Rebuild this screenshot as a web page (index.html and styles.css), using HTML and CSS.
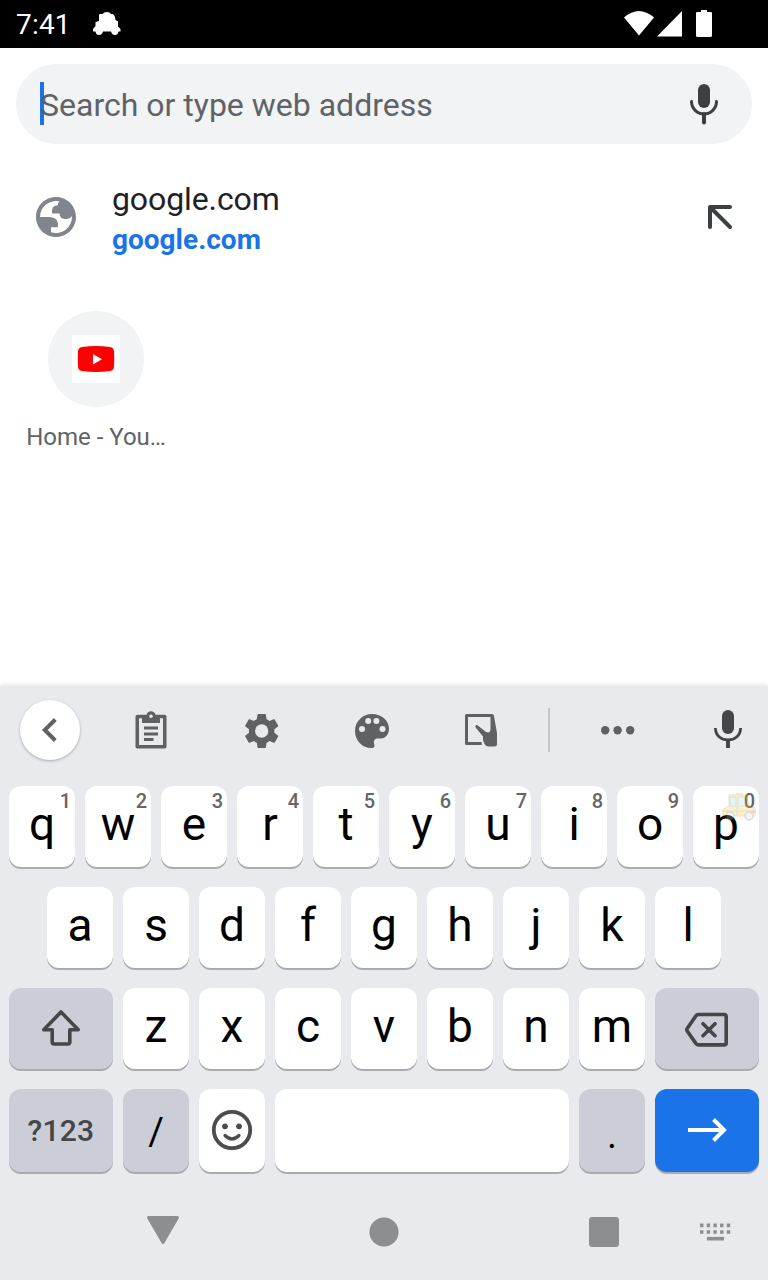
FILE: index.html
```html
<!DOCTYPE html>
<html lang="en">
<head>
<meta charset="utf-8">
<title>New tab</title>
<link rel="stylesheet" href="styles.css">
</head>
<body>
<div class="screen">
  <header class="status">
    <span class="clock">7:41</span>
    <svg class="car" width="30" height="26" viewBox="0 0 30 26"><path d="M7 11V5q0-1 1-1h2.500Q12 2 15 2t4 2h1.500Q23 5 23.500 10L26 11.500v5L28.500 19v2.500H26.500Q26 25 23 25t-4-3.500h-8Q10 25 7 25t-3.500-3.500H1V19l2.500-3v-4z" fill="#fff"/></svg>
    <svg class="signals" width="92" height="28" viewBox="0 0 92 28" fill="#fff"><path d="M0 7.500Q15-5.500 30 7.500L15 25.500z"/><path d="M58 1v25.500H33z"/><path d="M77 0h6v2h4q1 0 1 1v22.500q0 1.500-1.500 1.500h-13q-1.500 0-1.500-1.500V3q0-1 1-1h4z"/></svg>
  </header>
  <main class="page">
    <div class="search">
      <span class="cursor"></span>
      <span class="hint">Search or type web address</span>
      <svg class="icon" viewBox="0 0 48 48" fill="none" stroke="#3c4043"><rect x="18" y="4" width="12" height="24" rx="6" fill="#3c4043" stroke="none"/><path d="M11.500 21.500a12.500 12.500 0 0 0 25 0" stroke-width="3" stroke-linecap="round"/><path d="M24 34v8.500" stroke-width="4" stroke-linecap="round"/></svg>
    </div>
    <div class="suggestion">
      <svg class="icon" viewBox="0 0 24 24" fill="#80868b" fill-rule="evenodd"><path d="M12 2C6.480 2 2 6.480 2 12s4.480 10 10 10 10-4.480 10-10S17.520 2 12 2zM4 12h4.400c3.407.022 4.922 1.730 4.543 5.127H9.488v2.470a8.004 8.004 0 0 0 10.498-8.083C19.327 12.504 18.332 13 17 13c-2.137 0-3.206-.916-3.206-2.750h-3.748c-.274-2.728.683-4.092 2.870-4.092 0-.975.327-1.597.811-1.970A8.004 8.004 0 0 0 4 12z"/></svg>
      <div class="suggestion-text">
        <div class="title">google.com</div>
        <div class="url">google.com</div>
      </div>
      <svg class="icon" viewBox="0 0 48 48" fill="none" stroke="#3c4043" stroke-width="4" stroke-linecap="round" stroke-linejoin="round"><path d="M34 14H14v20M14.500 14.500L34 34"/></svg>
    </div>
    <div class="tile">
      <div class="tile-circle"><svg width="48" height="48" viewBox="0 0 48 48"><path fill="#fff" d="M0 0h48v48H0z"/><path fill="#f00" d="M10 12q14-2 28 0 3.500.500 4 4 .500 8 0 16-.500 3.500-4 4-14 2-28 0-3.500-.500-4-4-.500-8 0-16 .500-3.500 4-4z"/><path fill="#fff" d="M21 19v10.500l9-5.300z"/></svg></div>
      <div class="tile-label">Home - You…</div>
    </div>
  </main>
  <section class="keyboard">
    <div class="toolbar">
      <span class="back"><svg class="icon" viewBox="0 0 48 48" fill="none" stroke="#5f6163" stroke-width="4"><path d="M29.300 13.500L18.800 24 29.300 34.500"/></svg></span>
      <svg class="icon" viewBox="0 0 48 48"><path fill="none" stroke="#5f6163" stroke-width="3.500" stroke-linejoin="round" d="M10.250 10.500h27.500v30.250h-27.500z"/><path fill="#5f6163" d="M15 9h4.500a4.600 4.600 0 0 1 9 0H33v8H15zM17 20.500h14v3H17zM17 26.500h14v3H17zM17 32h9.500v3H17z"/><circle cx="24" cy="10.300" r="1.800" fill="#e8eaed"/></svg>
      <svg class="icon" viewBox="0 0 48 48"><g transform="translate(3.300 4.600) scale(1.700)"><path fill="#5f6163" d="M19.430 12.980c.04-.32.07-.64.07-.98s-.03-.66-.07-.98l2.110-1.650c.19-.15.24-.42.12-.64l-2-3.460c-.12-.22-.39-.3-.61-.22l-2.490 1c-.52-.4-1.080-.73-1.690-.98l-.38-2.650C14.460 2.180 14.250 2 14 2h-4c-.25 0-.46.18-.49.42l-.38 2.650c-.61.25-1.170.59-1.690.98l-2.490-1c-.23-.09-.49 0-.61.22l-2 3.460c-.13.22-.07.49.12.64l2.110 1.650c-.04.32-.07.65-.07.98s.03.66.07.98l-2.110 1.650c-.19.15-.24.42-.12.64l2 3.460c.12.22.39.3.61.22l2.490-1c.52.4 1.080.73 1.690.98l.38 2.650c.03.24.24.42.49.42h4c.25 0 .46-.18.49-.42l.38-2.650c.61-.25 1.170-.59 1.690-.98l2.490 1c.23.09.49 0 .61-.22l2-3.460c.12-.22.07-.49-.12-.64z"/><circle cx="12" cy="12" r="3.900" fill="#e8eaed"/></g></svg>
      <svg class="icon" viewBox="0 0 48 48"><path fill="#5f6163" d="M24 8C14.500 8 7 15.500 7 25s7 17 16.500 17c2.800 0 3.700-2 2.500-4-.5-2.700.3-5 2.500-5.500H33c4.500 0 8-4.500 8-9.500 0-8.500-7.500-15-17-15z"/><g fill="#e8eaed"><circle cx="14" cy="23" r="3"/><circle cx="20.200" cy="14.900" r="3"/><circle cx="28.400" cy="14.900" r="3"/><circle cx="34.500" cy="23" r="3"/></g></svg>
      <svg class="icon" viewBox="0 0 48 48"><path fill="none" stroke="#5f6163" stroke-width="3" stroke-linejoin="round" d="M35 9.500H9.500v28h15.200"/><path fill="#5f6163" d="M33.500 8h1.500q1.700 0 1.900 1.500L40 27v11q0 2.500-2.500 2.500h-6q-2.500 0-4-2.500l-1.500-4v-3.500L19 22q-1.500-2.500.5-3 .8-.1 2 1l7.500 6 2.500.5q2-.5 2-4z"/></svg>
      <span class="divider"></span>
      <svg class="icon" viewBox="0 0 48 48" fill="#5f6163"><circle cx="11.200" cy="24.200" r="4.200"/><circle cx="23.600" cy="24.200" r="4.200"/><circle cx="36.200" cy="24.200" r="4.200"/></svg>
      <svg class="icon kb-mic" viewBox="0 0 48 48" fill="none" stroke="#444648"><rect x="18" y="4" width="12" height="24" rx="6" fill="#444648" stroke="none"/><path d="M11.400 22c0 16 25.200 16 25.200 0" stroke-width="2.800"/><path d="M24 34v8" stroke-width="4"/></svg>
    </div>
    <div class="row">
      <div class="key">q<sup>1</sup></div><div class="key">w<sup>2</sup></div><div class="key">e<sup>3</sup></div><div class="key">r<sup>4</sup></div><div class="key">t<sup>5</sup></div><div class="key">y<sup>6</sup></div><div class="key">u<sup>7</sup></div><div class="key">i<sup>8</sup></div><div class="key">o<sup>9</sup></div>
      <div class="key">p<sup>0</sup>
        <svg class="taxi" width="36" height="30" viewBox="0 0 36 30"><path fill="#e8a33d" d="M14 1h7v2h-7z"/><path fill="#ffd21f" stroke="#c99a2a" d="M7 3h18l2 11 6 2v8H1v-7l6-3z"/><path fill="#a6dcef" stroke="#6c8fa0" d="M8 5h6v9H8zM16 5h7l2 9h-9z"/><path stroke="#6c8fa0" d="M1 19h33M15 14v10"/><path fill="#c66" d="M30 18h4v3h-4z"/><g fill="#ddd" stroke="#777" stroke-width="1.500"><circle cx="8" cy="24" r="4"/><circle cx="27" cy="24" r="4"/></g></svg>
      </div>
    </div>
    <div class="row">
      <div class="key">a</div><div class="key">s</div><div class="key">d</div><div class="key">f</div><div class="key">g</div><div class="key">h</div><div class="key">j</div><div class="key">k</div><div class="key">l</div>
    </div>
    <div class="row">
      <div class="key dark wide"><svg class="icon" viewBox="0 0 48 48" fill="none" stroke="#444648" stroke-width="3.600" stroke-linejoin="round"><path d="M24 8L6.800 25.800h8.400V38q0 2 2 2h13.600q2 0 2-2V25.800h8.400z"/></svg></div>
      <div class="key">z</div><div class="key">x</div><div class="key">c</div><div class="key">v</div><div class="key">b</div><div class="key">n</div><div class="key">m</div>
      <div class="key dark wide"><svg class="icon" viewBox="0 0 48 48" fill="none" stroke="#444648" stroke-width="3.600" stroke-linejoin="round" stroke-linecap="round"><path d="M15.500 10.500h25.700q2 0 2 2v26.400q0 2-2 2h-25.700q-1.800 0-2.700-1.500L4.200 27q-.8-1.400 0-2.600l8.600-12.400q.9-1.500 2.700-1.500zM20 19.700l12 12M32 19.700l-12 12"/></svg></div>
    </div>
    <div class="row last">
      <div class="key dark wide symbols">?123</div>
      <div class="key dark slash">/</div>
      <div class="key"><svg class="icon" viewBox="0 0 48 48" fill="none" stroke="#4c4c4c"><circle cx="24" cy="24" r="18.200" stroke-width="3.800"/><path d="M17 29.500q7 7 14 0" stroke-width="3.200" stroke-linecap="round"/><g fill="#4c4c4c" stroke="none"><circle cx="17" cy="20.300" r="2.900"/><circle cx="31" cy="20.300" r="2.900"/></g></svg></div>
      <div class="key space"></div>
      <div class="key dark dot">.</div>
      <div class="key wide go"><svg class="icon" viewBox="0 0 48 48" fill="none" stroke="#fff" stroke-width="4"><path d="M5 24h35M30.500 13.500L41 24 30.500 34.500"/></svg></div>
    </div>
    <nav class="nav">
      <svg class="icon" viewBox="0 0 48 48" fill="#8d8e90" stroke="#8d8e90" stroke-width="3" stroke-linejoin="round"><path d="M9.500 9.500h29L24 34.500z"/></svg>
      <svg class="icon" viewBox="0 0 48 48" fill="#8d8e90"><circle cx="24" cy="24" r="14.600"/></svg>
      <svg class="icon" viewBox="0 0 48 48" fill="#8d8e90"><rect x="9" y="9" width="30" height="30" rx="3"/></svg>
      <svg class="icon" viewBox="0 0 48 48" stroke="#8d8e90" stroke-width="3.600"><path stroke-dasharray="3.400 3.300" d="M9 17.400h31M9 24h31"/><path d="M16 30.700h17"/></svg>
    </nav>
  </section>
</div>
</body>
</html>
```

FILE: styles.css
```css
* { box-sizing: border-box; }
body { margin: 0; background: #fff; font-family: Roboto, "Liberation Sans", sans-serif; }
.screen { width: 768px; height: 1280px; display: flex; flex-direction: column; overflow: hidden; }
.icon { width: 48px; height: 48px; flex: none; display: block; }

.status { height: 48px; background: #000; color: #fff; display: flex; align-items: center; padding: 0 52px 0 16px; flex: none; }
.clock { font-size: 28px; line-height: 46px; padding-top: 2px; width: 76px; letter-spacing: .2px; }
.signals { margin-left: auto; }
.car { margin-bottom: 2px; }

.page { flex: 1; padding: 16px 0 0; }
.search { margin: 0 16px; height: 80px; border-radius: 40px; background: #f1f3f4; display: flex; align-items: center; padding: 0 24px; }
.cursor { width: 4px; height: 43px; background: #1a73e8; margin: 0 -4px 1px 0; }
.hint { flex: 1; font-size: 32px; line-height: 44px; padding-top: 2px; color: #5f6368; }
.suggestion { display: flex; align-items: center; margin-top: 24px; padding: 0 24px 0 32px; height: 98px; }
.suggestion-text { flex: 1; padding: 3px 0 0 32px; }
.title { font-size: 32px; line-height: 42px; color: #202124; letter-spacing: -.1px; }
.url { font-size: 28px; line-height: 39px; font-weight: 700; color: #1a73e8; }
.tile { width: 160px; margin: 45px 0 0 16px; display: flex; flex-direction: column; align-items: center; }
.tile-circle { width: 96px; height: 96px; border-radius: 50%; background: #f1f3f4; display: flex; align-items: center; justify-content: center; }
.tile-label { margin-top: 16px; font-size: 24px; line-height: 28px; color: #5f6368; white-space: nowrap; }

.keyboard { height: 594px; flex: none; background: #e8eaed; box-shadow: 0 0 6px rgba(0, 0, 0, .14); }
.toolbar { height: 88px; margin-bottom: 12px; display: grid; grid-template-columns: 100px 102px 119px 102px 116px 20px 118px 91px; align-items: center; justify-items: center; }
.back { width: 60px; height: 60px; border-radius: 50%; background: #fff; display: flex; align-items: center; justify-content: center; box-shadow: 0 1px 3px rgba(0, 0, 0, .28); }
.divider { width: 2px; height: 44px; background: #c4c6c9; }
.kb-mic { margin-left: 11px; }
.row { display: flex; justify-content: center; gap: 10px; height: 81px; margin-bottom: 20px; }
.key { position: relative; width: 66px; height: 100%; border-radius: 12px; background: #fff; color: #000; box-shadow: 0 2px 0 #a9abae; display: flex; align-items: center; justify-content: center; font-size: 46px; line-height: 54px; padding-bottom: 5px; }
.key sup { position: absolute; right: 4px; top: 3px; font-size: 20px; line-height: 24px; font-weight: 500; color: #666; }
.taxi { position: absolute; left: 29px; top: 6px; opacity: .28; }
.key .icon { margin-top: 4px; }
.dark { background: #cbced6; }
.wide { width: 104px; }
.last { height: 83px; margin-bottom: 12px; }
.symbols { font-size: 30px; font-weight: 500; color: #444648; letter-spacing: .3px; padding-bottom: 0; }
.slash { font-size: 38px; padding: 3px 0 0; }
.dot { font-size: 38px; padding: 9px 0 0; }
.space { width: 294px; }
.go { background: #1a73e8; }
.nav { height: 96px; display: grid; grid-template-columns: 221px 220px 111px 48px; padding-left: 139px; align-items: center; }
```
